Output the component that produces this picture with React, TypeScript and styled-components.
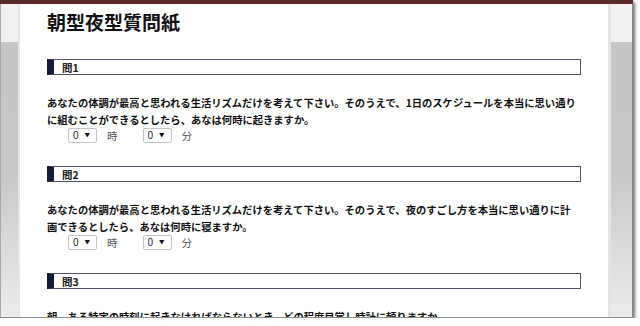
import React from 'react';
import styled, { createGlobalStyle } from 'styled-components';

const GlobalStyle = createGlobalStyle`
  html, body {
    margin: 0;
    padding: 0;
    background: #fff;
  }
  body {
    font-family: "Noto Sans CJK JP", "Noto Sans", sans-serif;
  }
`;

const Window = styled.div`
  width: 633px;
  height: 318px;
  display: flex;
  flex-direction: column;
  overflow: hidden;
  box-sizing: border-box;
  border-bottom: 1px solid #8e8e8e;
  box-shadow: 2px 2px 3px rgba(0, 0, 0, 0.55);
`;

const TopBar = styled.div`
  height: 4px;
  flex-shrink: 0;
  background: #5a2a2b;
`;

const Frame = styled.div`
  display: flex;
  flex: 1;
  min-height: 0;
`;

const Gutter = styled.div<{ side: 'left' | 'right' }>`
  width: ${({ side }) => (side === 'left' ? '20px' : '25px')};
  flex-shrink: 0;
  box-sizing: border-box;
  background: linear-gradient(
    to bottom,
    #f0f0f0 0,
    #f0f0f0 38px,
    #c6c6c6 38px,
    #c8c8c8 55%,
    #ececec 100%
  );
  border-left: ${({ side }) => (side === 'left' ? '1px solid #a8a8a8' : '3px solid #e4e4e4')};
  border-right: ${({ side }) => (side === 'left' ? '2px solid #e6e6e6' : '1px solid #8a8a8a')};
`;

const Main = styled.div`
  width: 588px;
  flex-shrink: 0;
  box-sizing: border-box;
  background: #fff;
  padding: 6px 27px 0;
  overflow: hidden;
`;

const Title = styled.h1`
  margin: 0 0 25px;
  font-size: 19px;
  line-height: 24px;
  font-weight: 700;
  color: #111;
`;

const Section = styled.section`
  margin-bottom: 23px;
`;

const QuestionHeader = styled.div`
  height: 16px;
  box-sizing: border-box;
  border: 1px solid #4e536b;
  border-left: 7px solid #161b3a;
  padding-left: 8px;
  display: flex;
  align-items: center;
  font-size: 10.5px;
  font-weight: 700;
  color: #222;
`;

const QuestionText = styled.p`
  margin: 20px 0 0;
  padding-right: 3px;
  font-size: 10.3px;
  line-height: 16.5px;
  font-weight: 700;
  color: #111;
`;

const TimeRow = styled.div`
  display: flex;
  align-items: center;
  height: 15px;
  padding-left: 21px;
`;

const SelectWrap = styled.span`
  position: relative;
  display: flex;
  width: 29px;
  height: 15px;

  &::after {
    content: '▼';
    position: absolute;
    right: 7px;
    top: 4px;
    font-size: 5.5px;
    line-height: 7px;
    color: #111;
    pointer-events: none;
  }
`;

const Select = styled.select`
  appearance: none;
  -webkit-appearance: none;
  display: block;
  width: 29px;
  height: 15px;
  box-sizing: border-box;
  margin: 0;
  padding: 0 0 0 4px;
  border: 1px solid #c4c4c4;
  border-radius: 2px;
  background: #fff;
  font-family: "Liberation Sans", Arial, sans-serif;
  font-size: 10px;
  line-height: 13px;
  color: #222;
`;

const Unit = styled.span`
  margin: 0 25px 0 10px;
  font-size: 10.5px;
  line-height: 15px;
  color: #555;
`;

const questions = [
  {
    label: '問1',
    text: 'あなたの体調が最高と思われる生活リズムだけを考えて下さい。そのうえで、1日のスケジュールを本当に思い通りに組むことができるとしたら、あなは何時に起きますか。',
    time: true,
  },
  {
    label: '問2',
    text: 'あなたの体調が最高と思われる生活リズムだけを考えて下さい。そのうえで、夜のすごし方を本当に思い通りに計画できるとしたら、あなは何時に寝ますか。',
    time: true,
  },
  {
    label: '問3',
    text: '朝、ある特定の時刻に起きなければならないとき、どの程度目覚し時計に頼りますか。',
    time: false,
  },
];

const TimePicker: React.FC = () => (
  <TimeRow>
    <SelectWrap>
      <Select defaultValue="0">
        {Array.from({ length: 24 }, (_, i) => (
          <option key={i} value={i}>{i}</option>
        ))}
      </Select>
    </SelectWrap>
    <Unit>時</Unit>
    <SelectWrap>
      <Select defaultValue="0">
        {Array.from({ length: 60 }, (_, i) => (
          <option key={i} value={i}>{i}</option>
        ))}
      </Select>
    </SelectWrap>
    <Unit>分</Unit>
  </TimeRow>
);

const App: React.FC = () => {
  return (
    <>
      <GlobalStyle />
      <Window>
        <TopBar />
        <Frame>
          <Gutter side="left" />
          <Main>
            <Title>朝型夜型質問紙</Title>
            {questions.map((q) => (
              <Section key={q.label}>
                <QuestionHeader>{q.label}</QuestionHeader>
                <QuestionText>{q.text}</QuestionText>
                {q.time && <TimePicker />}
              </Section>
            ))}
          </Main>
          <Gutter side="right" />
        </Frame>
      </Window>
    </>
  );
};

export default App;
